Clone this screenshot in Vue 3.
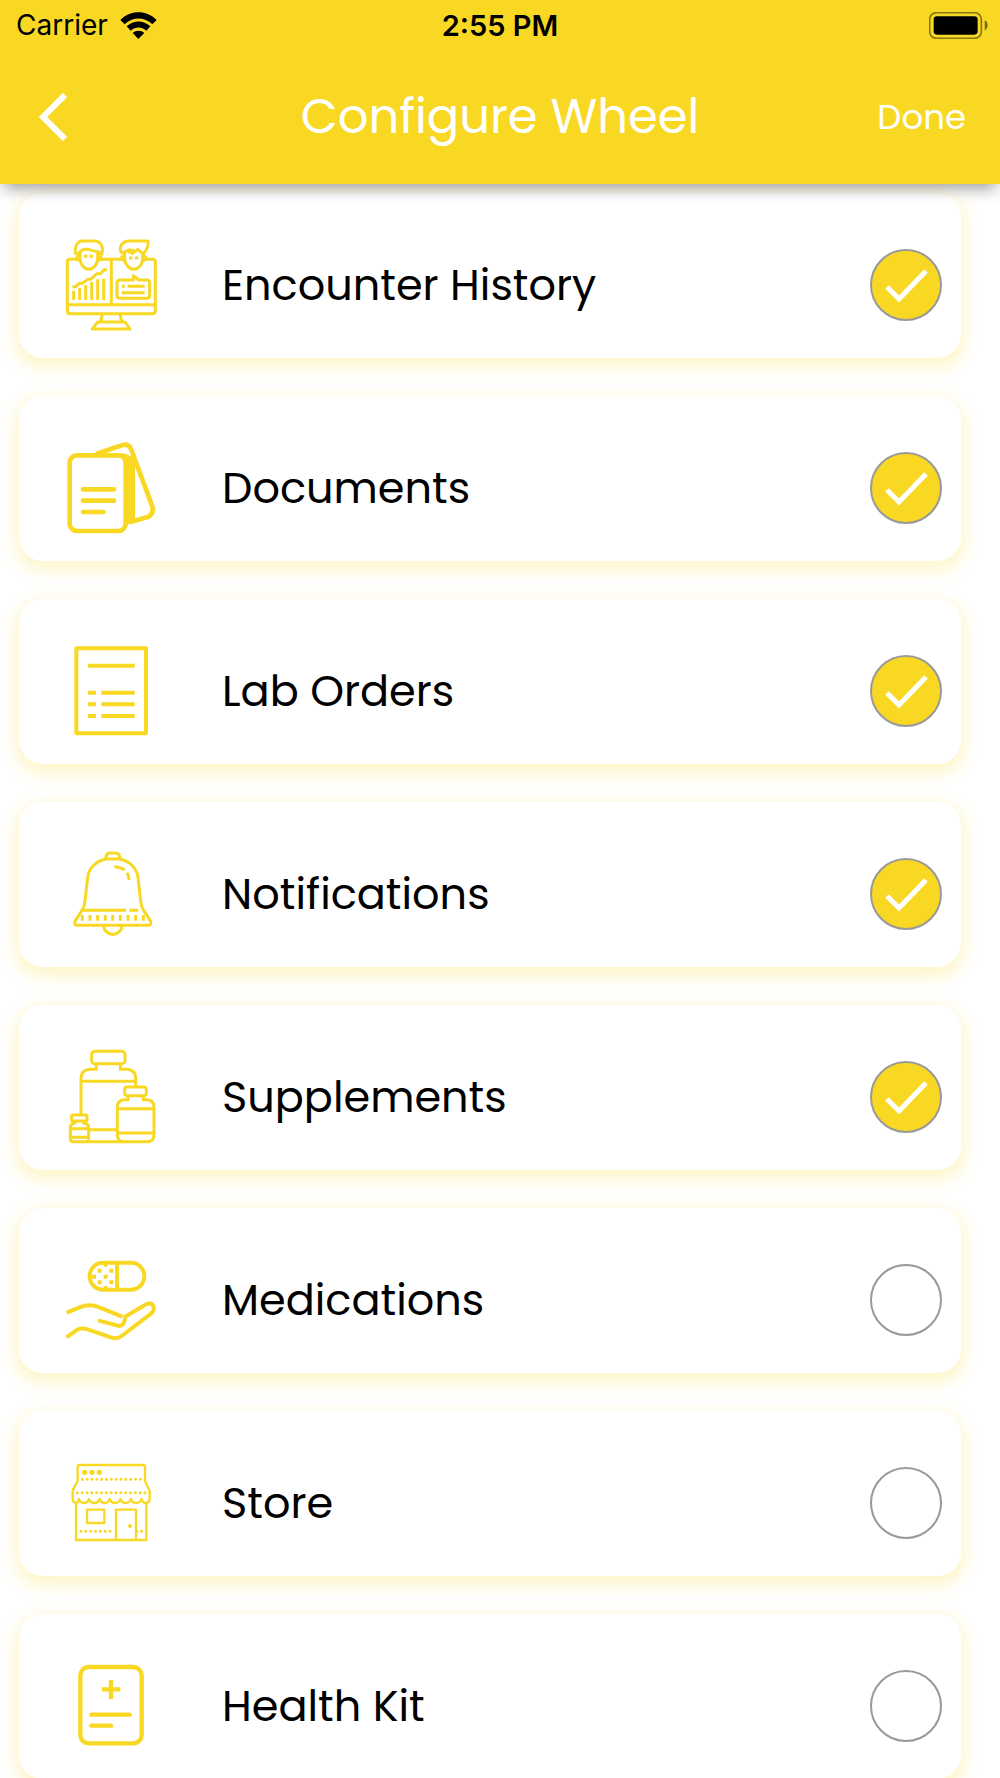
<template>
  <div class="screen">
    <header class="header">
      <div class="status-bar">
        <div class="carrier">
          <span>Carrier</span>
          <svg class="wifi" viewBox="0 0 111 81" aria-hidden="true">
            <path d="M1 24C31-7 79-7 110 24L97 37C74 14 37 14 14 37Z" />
            <path d="M20 43C41 24 70 24 91 43L79 56C64 43 47 43 32 56Z" />
            <path d="M38 63C48 54 63 54 73 63L55 81Z" />
          </svg>
        </div>
        <span class="clock">2:55 PM</span>
        <svg class="battery" viewBox="0 0 177 81" aria-hidden="true">
          <rect x="2" y="2" width="155" height="77" rx="20" fill="none" stroke="#000" stroke-opacity="0.45" stroke-width="5" />
          <rect x="14" y="13" width="132" height="55" rx="10" />
          <path d="M167 25C179 30 179 50 167 55Z" fill-opacity="0.5" />
        </svg>
      </div>

      <nav class="nav-bar">
        <button class="back-btn" type="button" aria-label="Back">
          <svg viewBox="0 0 28 48" aria-hidden="true">
            <path d="M26 2L4 24L26 46" />
          </svg>
        </button>
        <h1 class="title">Configure Wheel</h1>
        <button class="done-btn" type="button">Done</button>
      </nav>
    </header>

    <main class="list">
      <label v-for="item in items" :key="item.id" class="card">
        <svg class="icon" :viewBox="item.viewBox" aria-hidden="true">
          <!-- Encounter history -->
          <g v-if="item.id === 'encounter'" stroke-width="9">
            <path d="M85 103H60Q52 103 52 111V258Q52 266 60 266H308Q316 266 316 258V111Q316 103 308 103H291M150 103H218M52 239H316M184 103V239" />
            <path d="M157 267L152 290M210 267L215 290M143 291H225L240 312H127Z" />
            <path d="M78 90C71 65 82 48 98 48H134C152 48 162 66 155 91" />
            <path d="M80 88C92 84 90 75 104 73C119 70 128 80 145 80L154 88M90 83V103C92 119 103 133 116 133C130 133 142 118 143 103V81" />
            <path d="M88 92Q79 94 81 103L91 108M145 92Q155 94 153 103L143 108" />
            <path d="M214 85C205 65 218 48 237 48H294C296 64 288 80 278 87" />
            <path d="M214 84C224 84 228 76 240 74L238 82L249 76L247 86L263 73L276 84M224 83V103C226 119 238 133 251 133C265 133 277 119 278 103V82" />
            <path d="M222 92Q213 94 215 103L225 108M280 92Q290 94 288 103L278 108" />
            <path d="M102 94H112M119 94H129M237 99H247M255 99H265M67 185H77L88 175H97L113 163H122L141 146H151L163 134H171" />
            <path d="M71 197V225M89 189V225M107 180V225M125 171V225M143 163V225M161 161V225" />
            <path d="M210 165H250V152L266 165H290Q299 165 299 174V211Q299 220 290 220H210Q201 220 201 211V174Q201 165 210 165Z" />
            <path d="M215 184H224M233 184H284M215 203H284" />
          </g>

          <!-- Documents -->
          <g v-else-if="item.id === 'documents'" stroke-width="14">
            <path d="M138 87L216 61Q235 54 243 72L305 239Q315 263 296 275L239 292" />
            <rect x="59" y="91" width="168" height="227" rx="22" />
            <path class="solid" d="M205 85C235 84 254 95 255 122V278Q254 294 230 299V115Q227 99 205 97Z" />
            <path stroke-linecap="round" d="M99 193H192M99 227H192M99 261H160" />
          </g>

          <!-- Lab orders -->
          <g v-else-if="item.id === 'lab'" stroke-width="12">
            <path d="M79 55H288V310H79Z" />
            <path d="M114 107H254M114 188H138M154 188H254M114 223H138M154 223H254M114 258H138M154 258H254" />
          </g>

          <!-- Notifications -->
          <g v-else-if="item.id === 'notifications'" stroke-width="9">
            <path d="M168 72V65Q170 54 180 54H196Q207 54 209 65V72M168 72H209" />
            <path d="M168 72C138 78 116 99 113 128L105 198Q104 214 96 226L75 259Q70 271 83 271H293Q306 271 302 259L281 226Q273 214 272 198L264 128C261 99 239 78 209 72" />
            <path d="M96 226H228M238 226H265M193 95Q211 95 224 105M231 113Q237 123 237 135M161 272C164 307 213 307 216 272" />
            <path d="M97 240V257M120 240V257M143 240V257M166 240V257M188 240V257M211 240V257M234 240V257M257 240V257M280 240V257" />
          </g>

          <!-- Supplements -->
          <g v-else-if="item.id === 'supplements'" stroke-width="9">
            <rect x="125" y="49" width="100" height="37" rx="9" />
            <path d="M139 88V103H119Q93 105 93 130V237M211 88V103H231Q257 105 257 130V155M93 139H257" />
            <rect x="224" y="156" width="65" height="26" rx="7" />
            <path d="M234 183V194H223Q202 196 202 216V299Q202 320 223 320H291Q312 320 312 299V216Q312 196 291 194H280V183M202 221H312M202 294H312" />
            <rect x="65" y="240" width="46" height="18" rx="4" />
            <path d="M75 259V264Q61 266 61 278V312Q61 320 69 320H223M101 259V264Q116 266 116 278V320M61 281H116M61 307H116M116 284H202" />
          </g>

          <!-- Medications -->
          <g v-else-if="item.id === 'medications'" stroke-width="12">
            <rect x="119" y="53" width="164" height="81" rx="40" />
            <path d="M201 53V134" />
            <path d="M50 203L95 185Q118 177 142 185L217 215M50 277L82 254Q96 247 113 253L182 277Q200 284 215 273L304 205Q315 195 310 183Q302 170 286 179L225 215Q225 240 208 243L144 226" />
            <path class="solid" d="M143 71H155V83H143ZM178 71H190V83H178ZM126 89H138V101H126ZM161 89H173V101H161ZM143 106H155V118H143ZM178 106H190V118H178ZM161 56H172V65H161ZM161 123H172V132H161Z" />
          </g>

          <!-- Store -->
          <g v-else-if="item.id === 'store'" stroke-width="7">
            <path d="M83 108V66Q83 60 89 60H279Q285 60 285 66V108L299 138V160C299 178 278 178 275 162C270 178 249 178 243 162C238 178 217 178 211 162C206 178 185 178 179 162C174 178 155 178 149 162C143 178 123 178 117 162C111 178 92 178 87 162C84 178 68 176 68 160V136L83 108" />
            <path d="M78 173V285H289V173M198 285V194H258V285M111 194H163V234H111Z" />
            <g stroke-linecap="round">
              <path stroke-width="16" d="M104 82H104.1M126 82H126.1M148 82H148.1" />
              <path stroke-width="12" d="M240 243H240.1" />
              <path stroke-width="9" stroke-dasharray="0 14.5" d="M97 103H274M82 143H290M93 259H193M260 259H276" />
            </g>
          </g>

          <!-- Health kit -->
          <g v-else stroke-width="13">
            <rect x="91" y="51" width="184" height="229" rx="25" />
            <path d="M156 118H211M183 90V147" />
            <path stroke-linecap="round" d="M124 194H239M124 227H183" />
          </g>
        </svg>

        <span class="name">{{ item.name }}</span>

        <span class="tick">
          <input v-model="item.selected" type="checkbox" />
          <svg viewBox="0 0 72 72" aria-hidden="true">
            <path d="M17 38L29 50L56 22" />
          </svg>
        </span>
      </label>
    </main>
  </div>
</template>

<script setup>
import { ref } from 'vue'

const items = ref([
  { id: 'encounter', name: 'Encounter History', viewBox: '0 0 360 360', selected: true },
  { id: 'documents', name: 'Documents', viewBox: '0 9 360 360', selected: true },
  { id: 'lab', name: 'Lab Orders', viewBox: '0 3 360 360', selected: true },
  { id: 'notifications', name: 'Notifications', viewBox: '0 -3 360 360', selected: true },
  { id: 'supplements', name: 'Supplements', viewBox: '0 6 360 360', selected: true },
  { id: 'medications', name: 'Medications', viewBox: '0 -15 360 360', selected: false },
  { id: 'store', name: 'Store', viewBox: '0 -6 360 360', selected: false },
  { id: 'health', name: 'Health Kit', viewBox: '0 -12 360 360', selected: false }
])
</script>

<style>
body {
  margin: 0;
  background: #fff;
}
</style>

<style scoped>
.screen {
  font-family: Poppins, Inter, sans-serif;
  color: #000;
}

.header {
  position: sticky;
  top: 0;
  z-index: 1;
  background: #f9d824;
  box-shadow: 0 9px 14px -4px rgba(0, 0, 0, 0.36);
}

.status-bar {
  display: grid;
  grid-template-columns: 1fr auto 1fr;
  align-items: center;
  height: 50px;
  padding: 0 12px;
  font-family: Inter, sans-serif;
  font-size: 28px;
}

.carrier {
  display: flex;
  align-items: center;
  gap: 12px;
  padding-left: 4px;
}

.wifi {
  width: 37px;
  height: 27px;
}

.clock {
  font-size: 29px;
  font-weight: 600;
}

.battery {
  justify-self: end;
  width: 59px;
  height: 27px;
}

.nav-bar {
  display: grid;
  grid-template-columns: 1fr auto 1fr;
  align-items: center;
  height: 134px;
  padding: 0 34px;
  color: #fff;
}

.back-btn,
.done-btn {
  padding: 0;
  border: none;
  background: none;
  color: inherit;
  font: inherit;
  cursor: pointer;
}

.back-btn {
  justify-self: start;
  display: flex;
  padding-left: 5px;
}

.back-btn svg {
  width: 28px;
  height: 48px;
  fill: none;
  stroke: currentColor;
  stroke-width: 6;
}

.title {
  margin: 0;
  font-size: 48px;
  font-weight: 400;
}

.done-btn {
  justify-self: end;
  font-size: 34px;
}

.list {
  display: flex;
  flex-direction: column;
  gap: 38px;
  padding: 9px 39px 0 19px;
}

.card {
  display: flex;
  align-items: center;
  box-sizing: border-box;
  height: 165px;
  padding: 19px 19px 0 31px;
  border-radius: 24px;
  background: #fff;
  box-shadow: 0 6px 16px 4px rgba(249, 216, 36, 0.24);
  cursor: pointer;
}

.icon {
  flex: none;
  width: 120px;
  height: 120px;
  fill: none;
  stroke: #f9d824;
  stroke-linejoin: round;
}

.icon .solid {
  fill: #f9d824;
  stroke: none;
}

.name {
  flex: 1;
  padding-left: 52px;
  font-size: 43px;
}

.tick {
  display: grid;
  flex: none;
}

.tick input,
.tick svg {
  grid-area: 1 / 1;
  width: 72px;
  height: 72px;
}

.tick input {
  appearance: none;
  box-sizing: border-box;
  margin: 0;
  border: 2px solid #999;
  border-radius: 50%;
  background: #fff;
  cursor: pointer;
}

.tick input:checked {
  background: #f9d824;
}

.tick svg {
  visibility: hidden;
  fill: none;
  stroke: #fff;
  stroke-width: 5;
  pointer-events: none;
}

.tick input:checked + svg {
  visibility: visible;
}
</style>
